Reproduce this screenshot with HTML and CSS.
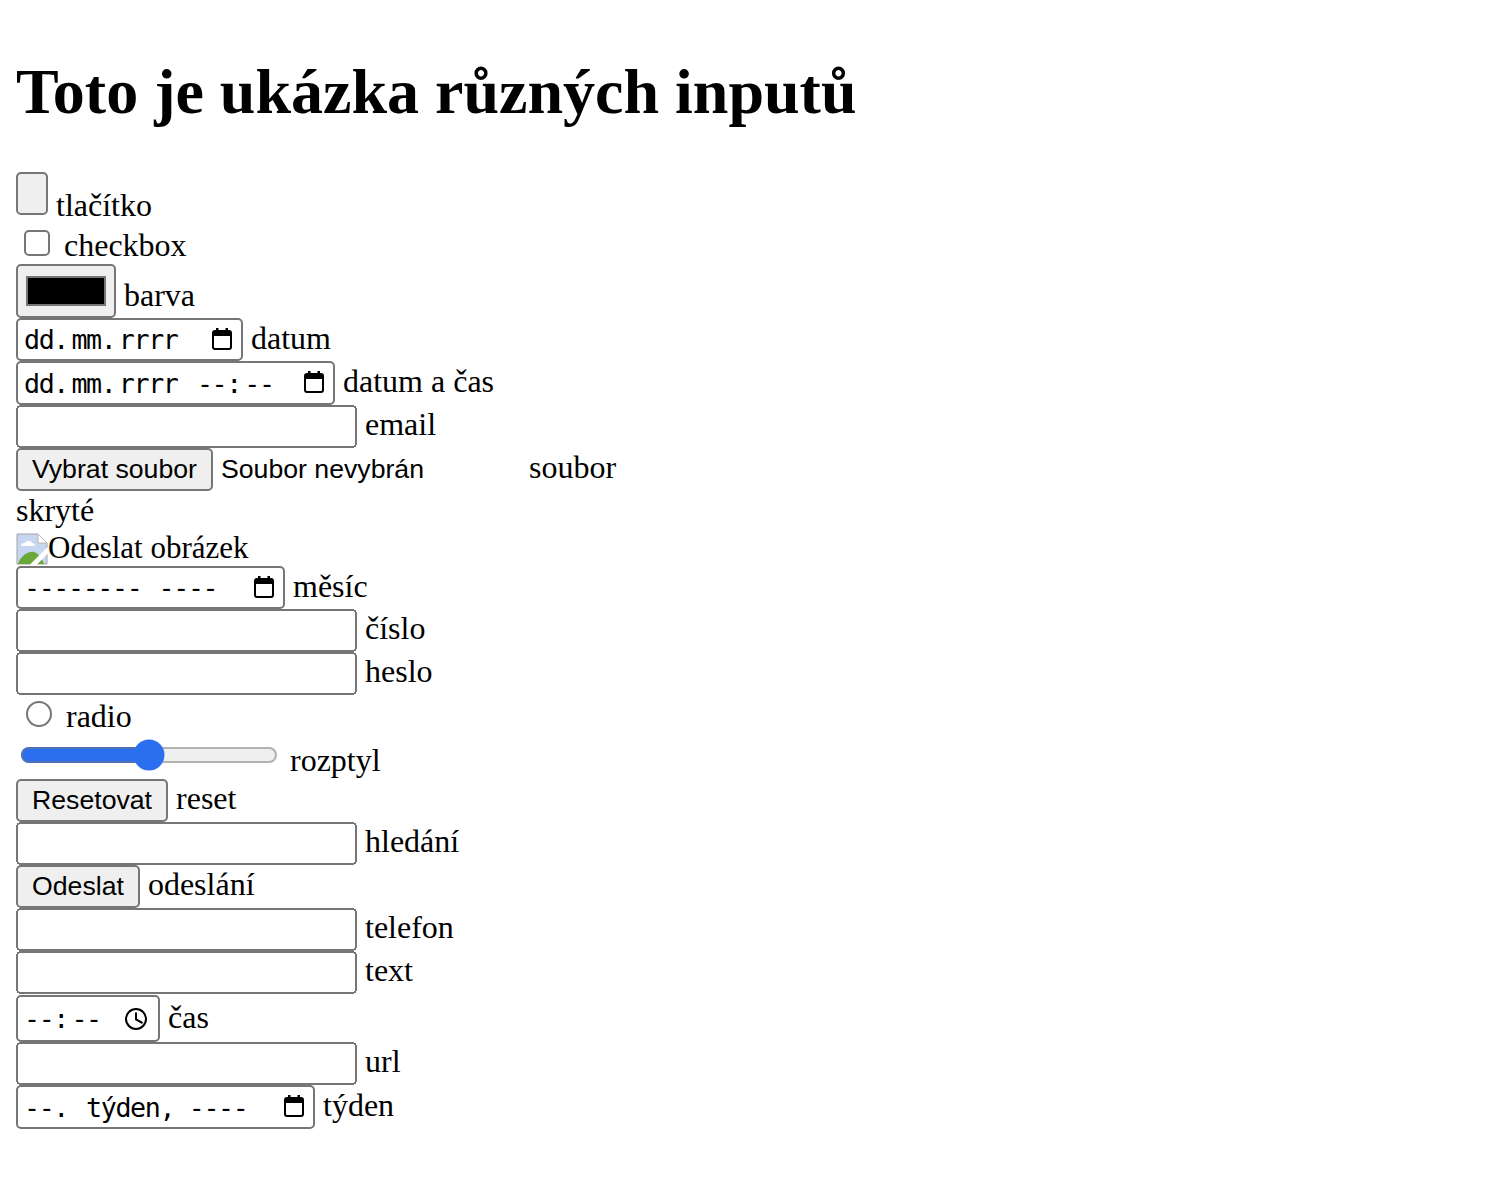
FILE: index.html
```html
<!DOCTYPE html>
<html lang="cs" class="scaled">
<head>
    <meta charset="UTF-8">
    <meta name="viewport" content="width=device-width, initial-scale=1.0">
    <title>Inputy</title>
    <link rel="stylesheet" href="styles.css">
</head>
<body>
    <h1 class="title">Toto je ukázka různých inputů</h1>
    <form>
        <input class="empty-button" type="button"> tlačítko<br>
        <input type="checkbox"> checkbox<br>
        <input type="color"> barva<br>
        <span class="picker picker-date"><span class="picker-text"><span class="seg">dd</span><span class="sep">.</span><span class="seg">mm</span><span class="sep">.</span><span class="seg">rrrr</span></span><svg class="icon" viewBox="0 0 20 22"><use href="#calendar"/></svg></span> datum<br>
        <span class="picker picker-datetime"><span class="picker-text"><span class="seg">dd</span><span class="sep">.</span><span class="seg">mm</span><span class="sep">.</span><span class="seg">rrrr</span><span class="sep gap-wide"> </span><span class="seg">--</span><span class="sep">:</span><span class="seg">--</span></span><svg class="icon" viewBox="0 0 20 22"><use href="#calendar"/></svg></span> datum a čas<br>
        <input class="text-field" type="email"> email<br>
        <span class="file-picker"><button class="file-button" type="button">Vybrat soubor</button><span class="file-name">Soubor nevybrán</span></span> soubor<br>
        <input type="hidden"> skryté<br>
        <span class="image-button"><svg class="broken-image" viewBox="0 0 32 32">
            <path d="M1 1H22L31 10V31H1Z" fill="#c6d5f0" stroke="#a3a3a3"/>
            <path d="M22 1V10H31Z" fill="#fff" stroke="#b8b8b8"/>
            <path d="M5 13c0-3 3-3 4-3 1-3 6-3 7 0 2 0 3 1 3 3Z" fill="#fff"/>
            <path d="M2 31C5 22 13 18 18 19 23 21 26 25 28 31Z" fill="#6aa83c"/>
            <path d="M16 33 33 16" stroke="#fff" stroke-width="5"/>
        </svg>Odeslat obrázek</span><br>
        <span class="picker picker-month"><span class="picker-text"><span class="seg">--------</span><span class="sep gap"> </span><span class="seg">----</span></span><svg class="icon" viewBox="0 0 20 22"><use href="#calendar"/></svg></span> měsíc<br>
        <input class="text-field" type="number"> číslo<br>
        <input class="text-field" type="password"> heslo<br>
        <input type="radio"> radio<br>
        <input class="slider" type="range"> rozptyl<br>
        <input class="sans" type="reset" value="Resetovat"> reset<br>
        <input class="text-field" type="search"> hledání<br>
        <input class="sans" type="submit" value="Odeslat"> odeslání<br>
        <input class="text-field" type="tel"> telefon<br>
        <input class="text-field" type="text"> text<br>
        <span class="picker picker-time"><span class="picker-text"><span class="seg">--</span><span class="sep">:</span><span class="seg">--</span></span><svg class="icon icon-clock" viewBox="0 0 22 22"><circle cx="11" cy="11" r="10" fill="none" stroke="#000" stroke-width="2"/><path d="M11 4.5V11.5L17.5 15" fill="none" stroke="#000" stroke-width="2"/></svg></span> čas<br>
        <input class="text-field" type="url"> url<br>
        <span class="picker picker-week"><span class="picker-text"><span class="seg">--</span><span class="sep">.</span><span class="seg"> týden, ----</span></span><svg class="icon" viewBox="0 0 20 22"><use href="#calendar"/></svg></span> týden<br>
    </form>
    <svg class="icon-defs" aria-hidden="true">
        <symbol id="calendar" viewBox="0 0 20 22">
            <rect x="1" y="3" width="18" height="18" rx="2" fill="none" stroke="#000" stroke-width="2"/>
            <path d="M1 3.5H19V8H1Z M4 0H6.5V4H4Z M13.5 0H16V4H13.5Z" fill="#000"/>
        </symbol>
    </svg>
</body>
</html>
```
FILE: styles.css
```css
.scaled {
    zoom: 2;
}
body {
    font-family: "Liberation Serif", serif;
}
.title {
    margin-top: 19.44px;
}
.sans, .file-button, .file-name {
    font-family: "Liberation Sans", sans-serif;
}
.empty-button {
    vertical-align: 7px;
}
.text-field {
    box-sizing: border-box;
    width: 170.5px;
}
.picker {
    box-sizing: border-box;
    display: inline-flex;
    align-items: center;
    justify-content: space-between;
    height: 21.75px;
    padding: 1px 4.5px 1px 3px;
    border: 1px solid #767676;
    border-radius: 2.5px;
    background: #fff;
    color: #000;
    font-family: "DejaVu Sans Mono", monospace;
    font-size: 13.333px;
}
.picker-date {
    width: 113.5px;
}
.picker-datetime {
    width: 159.5px;
}
.picker-month {
    width: 134.5px;
}
.picker-time {
    width: 72px;
    height: 23.5px;
    margin-top: 0.5px;
    padding-right: 5.5px;
}
.picker-week {
    width: 149.5px;
}
.picker-text {
    white-space: pre;
}
.seg {
    letter-spacing: -0.69px;
}
.sep {
    letter-spacing: 1px;
}
.gap {
    letter-spacing: 0.6px;
}
.gap-wide {
    letter-spacing: 1.7px;
}
.icon {
    flex: none;
    width: 10px;
    height: 11px;
    margin-bottom: 1px;
}
.icon-clock {
    width: 11px;
    margin-bottom: 0;
}
.icon-defs {
    display: none;
}
.file-picker {
    display: inline-block;
    width: 252.5px;
    margin-bottom: 0.5px;
}
.file-name {
    margin-left: 4px;
    font-size: 13.333px;
}
.file-button {
    font-size: 13.333px;
}
.image-button {
    display: inline-block;
    font-size: 15.5px;
    line-height: 15px;
}
.broken-image {
    float: left;
    width: 16px;
    height: 16px;
}
.slider {
    accent-color: #2b6ff0;
}
```
